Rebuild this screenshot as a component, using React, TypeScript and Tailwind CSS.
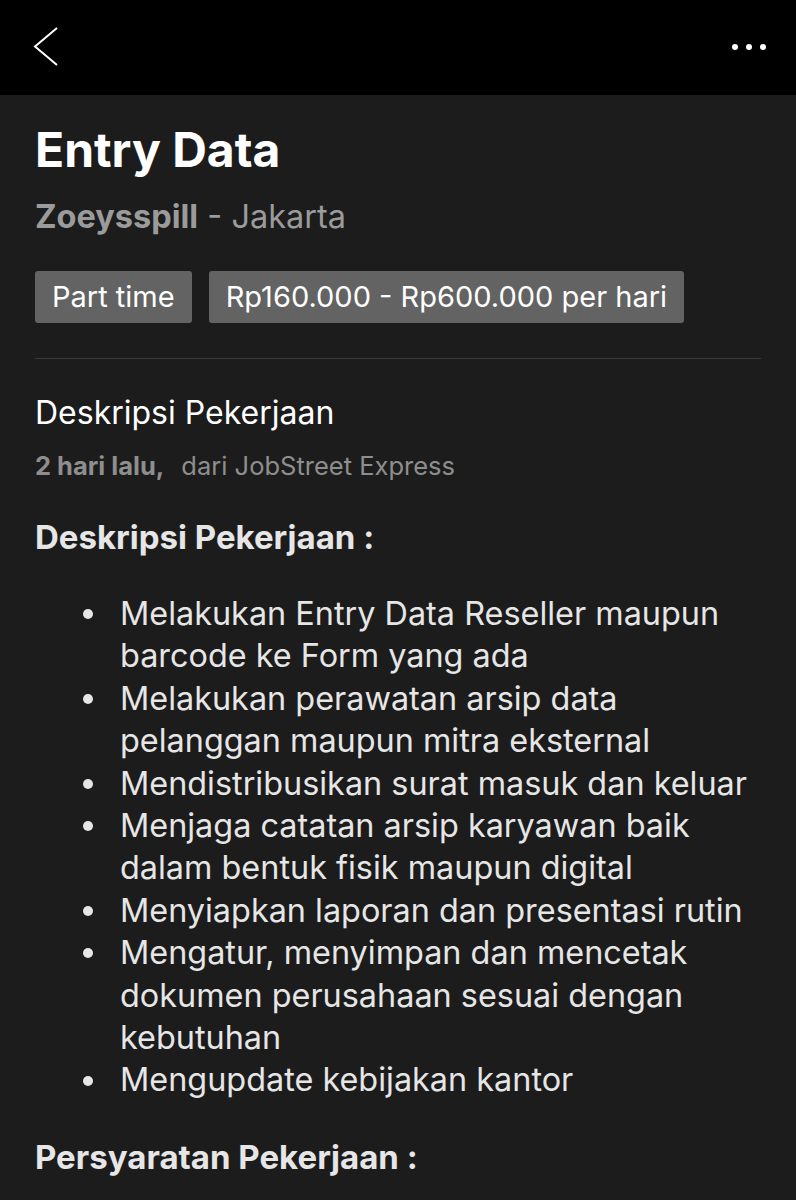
const tugas = [
  "Melakukan Entry Data Reseller maupun barcode ke Form yang ada",
  "Melakukan perawatan arsip data pelanggan maupun mitra eksternal",
  "Mendistribusikan surat masuk dan keluar",
  "Menjaga catatan arsip karyawan baik dalam bentuk fisik maupun digital",
  "Menyiapkan laporan dan presentasi rutin",
  "Mengatur, menyimpan dan mencetak dokumen perusahaan sesuai dengan kebutuhan",
  "Mengupdate kebijakan kantor",
];

export default function App() {
  return (
    <div className="min-h-[1200px] bg-[#1c1c1c] font-['Inter',sans-serif] text-white overflow-hidden">
      {/* Top bar */}
      <div className="h-[95px] bg-black flex items-center justify-between pl-[33px] pr-[30px]">
        <svg width="26" height="40" viewBox="0 0 26 40" fill="none" className="-mt-[1px]">
          <polyline points="24,1 2,19.5 24,38" stroke="white" strokeWidth="2" strokeLinejoin="miter" />
        </svg>
        <div className="flex items-center gap-[8px] -mt-[1px]">
          <span className="w-[6px] h-[6px] rounded-full bg-white" />
          <span className="w-[6px] h-[6px] rounded-full bg-white" />
          <span className="w-[6px] h-[6px] rounded-full bg-white" />
        </div>
      </div>

      <div className="px-[35px]">
        <h1 className="mt-[27px] text-[48px] leading-[56px] font-bold">Entry Data</h1>
        <p className="mt-[19px] text-[32.5px] leading-[40px] text-[#9b9b9b]">
          <span className="font-bold">Zoeysspill</span> - Jakarta
        </p>

        <div className="mt-[34px] flex gap-[17px]">
          <span className="h-[52px] px-[17px] flex items-center rounded-[3px] bg-[#636363] text-[29px]">Part time</span>
          <span className="h-[52px] px-[17px] flex items-center rounded-[3px] bg-[#636363] text-[29px]">
            Rp160.000 - Rp600.000 per hari
          </span>
        </div>

        <div className="mt-[35px] h-px bg-[#383838]" />

        <h2 className="mt-[34px] text-[32px] leading-[40px]">Deskripsi Pekerjaan</h2>
        <p className="mt-[18px] text-[25.5px] leading-[30px] text-[#8e8e8e]">
          <span className="font-bold">2 hari lalu,</span>
          <span className="ml-[17px]">dari JobStreet Express</span>
        </p>

        <h3 className="mt-[36px] text-[33px] leading-[40px] font-bold text-[#e6e6e6]">Deskripsi Pekerjaan :</h3>

        <ul className="mt-[36px] pl-[48px] text-[32.4px] leading-[42.4px] text-[#e6e6e6]">
          {tugas.map((t) => (
            <li key={t} className="flex">
              <span className="w-[37px] h-[42.4px] shrink-0 flex items-center">
                <span className="w-[10px] h-[10px] rounded-full bg-[#e6e6e6]" />
              </span>
              <span>{t}</span>
            </li>
          ))}
        </ul>

        <h3 className="mt-[35px] text-[33px] leading-[40px] font-bold text-[#e6e6e6]">Persyaratan Pekerjaan :</h3>
      </div>
    </div>
  );
}
